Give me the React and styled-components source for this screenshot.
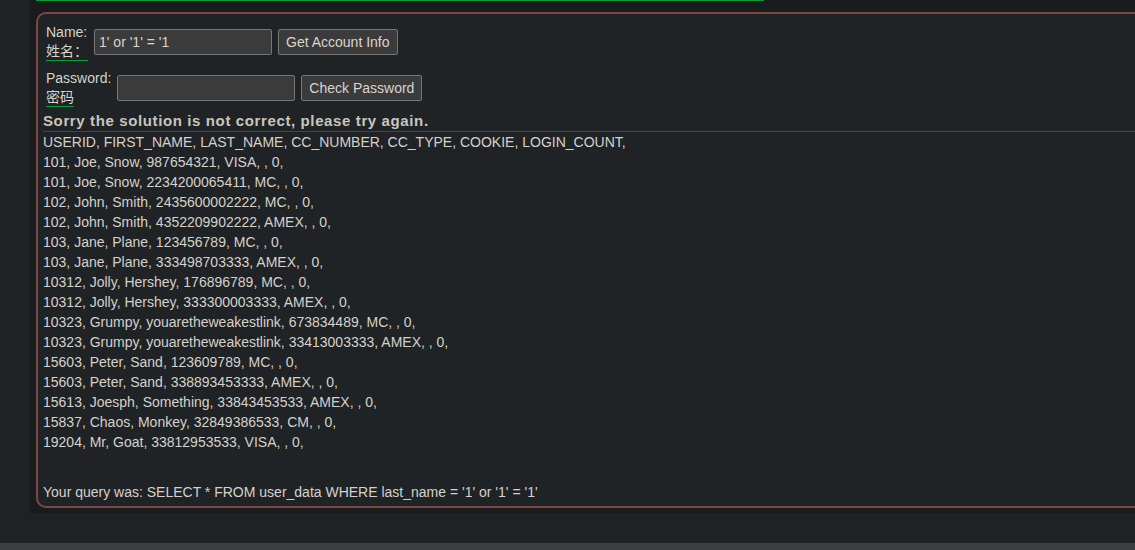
import styled, { createGlobalStyle } from "styled-components";

const GlobalStyle = createGlobalStyle`
  html, body {
    margin: 0;
    padding: 0;
    background: #1f2224;
    overflow: hidden;
  }
  body {
    font-family: "Liberation Sans", Arial, "Noto Sans CJK SC", sans-serif;
    font-size: 14px;
    color: #d5d1cb;
  }
`;

const rows = [
  "USERID, FIRST_NAME, LAST_NAME, CC_NUMBER, CC_TYPE, COOKIE, LOGIN_COUNT,",
  "101, Joe, Snow, 987654321, VISA, , 0,",
  "101, Joe, Snow, 2234200065411, MC, , 0,",
  "102, John, Smith, 2435600002222, MC, , 0,",
  "102, John, Smith, 4352209902222, AMEX, , 0,",
  "103, Jane, Plane, 123456789, MC, , 0,",
  "103, Jane, Plane, 333498703333, AMEX, , 0,",
  "10312, Jolly, Hershey, 176896789, MC, , 0,",
  "10312, Jolly, Hershey, 333300003333, AMEX, , 0,",
  "10323, Grumpy, youaretheweakestlink, 673834489, MC, , 0,",
  "10323, Grumpy, youaretheweakestlink, 33413003333, AMEX, , 0,",
  "15603, Peter, Sand, 123609789, MC, , 0,",
  "15603, Peter, Sand, 338893453333, AMEX, , 0,",
  "15613, Joesph, Something, 33843453533, AMEX, , 0,",
  "15837, Chaos, Monkey, 32849386533, CM, , 0,",
  "19204, Mr, Goat, 33812953533, VISA, , 0,",
];

export default function App() {
  return (
    <Page>
      <GlobalStyle />
      <Main>
        <Panel>
          <Progress />
          <Attack>
            <FormRow $h={43}>
              <Label>
                Name:
                <br />
                <Cn>姓名：</Cn>
              </Label>
              <Input defaultValue="1' or '1' = '1" />
              <Button>Get Account Info</Button>
            </FormRow>
            <FormRow $h={49}>
              <Label>
                Password:
                <br />
                <Cn>密码</Cn>
              </Label>
              <Input type="password" />
              <Button>Check Password</Button>
            </FormRow>
            <Feedback>Sorry the solution is not correct, please try again.</Feedback>
            <Output>
              {rows.map((r, i) => (
                <Line key={i}>{r}</Line>
              ))}
              <Query>Your query was: SELECT * FROM user_data WHERE last_name = '1' or '1' = '1'</Query>
            </Output>
          </Attack>
        </Panel>
      </Main>
      <Footer />
    </Page>
  );
}

const Page = styled.div`
  height: 550px;
  display: flex;
  flex-direction: column;
`;

const Main = styled.div`
  flex: 1;
  padding-left: 30px;
`;

const Panel = styled.div`
  background: #1a1b1d;
  height: 513px;
  padding-left: 6px;
  display: flex;
  flex-direction: column;
`;

const Progress = styled.div`
  width: 728px;
  height: 1px;
  background: #0a9a3a;
  margin-bottom: 11px;
`;

const Attack = styled.div`
  width: 1200px;
  height: 496px;
  box-sizing: border-box;
  background: #202325;
  border: 2px solid #7a4747;
  border-radius: 10px;
  padding: 6px 5px 0;
`;

const FormRow = styled.div`
  display: flex;
  align-items: center;
  gap: 6px;
  padding-left: 3px;
  height: ${(p) => p.$h}px;
`;

const Label = styled.div`
  line-height: 19px;
  color: #d6d2cc;
`;

const Cn = styled.span`
  display: inline-block;
  border-bottom: 1px solid #0e9b3c;
  line-height: 17px;
`;

const Input = styled.input`
  width: 178px;
  height: 26px;
  box-sizing: border-box;
  background: #3b3b3b;
  border: 1px solid #767676;
  border-radius: 2px;
  color: #d8d4ce;
  font: 14px "Liberation Sans", Arial, sans-serif;
  padding: 0 4px;
  outline: none;
`;

const Button = styled.button`
  height: 26px;
  box-sizing: border-box;
  background: #3b3b3b;
  border: 1px solid #767676;
  border-radius: 2px;
  color: #d8d4ce;
  font: 14px "Liberation Sans", Arial, sans-serif;
  padding: 0 7px;
`;

const Feedback = styled.div`
  font-weight: bold;
  font-size: 15px;
  letter-spacing: 0.62px;
  color: #c9c5bf;
  line-height: 18px;
  padding-bottom: 1px;
  border-bottom: 1px solid #454545;
`;

const Output = styled.div`
  line-height: 20px;
`;

const Line = styled.div``;

const Query = styled.div`
  margin-top: 30px;
`;

const Footer = styled.div`
  height: 7px;
  background: #3b3f42;
`;
